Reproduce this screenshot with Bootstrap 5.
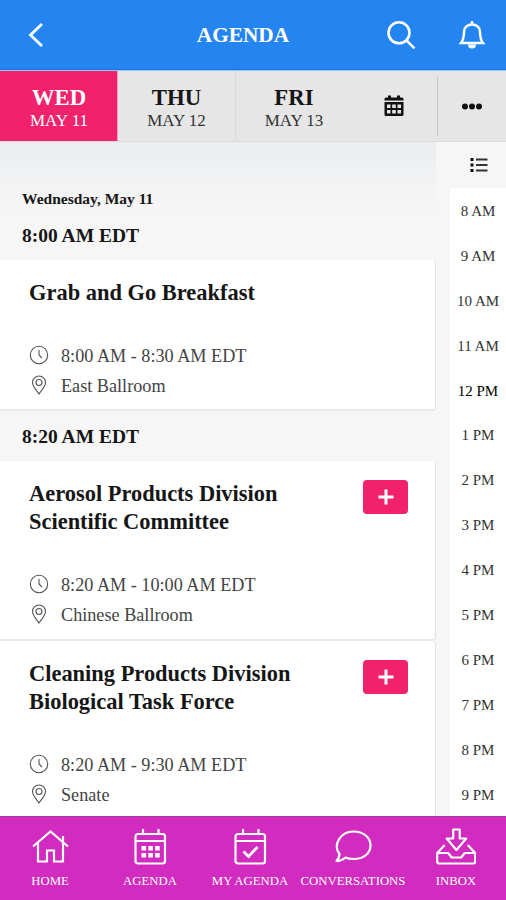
<!DOCTYPE html>
<html lang="en">
<head>
<meta charset="utf-8">
<meta name="viewport" content="width=device-width, initial-scale=1">
<title>Agenda</title>
<link href="https://cdn.jsdelivr.net/npm/bootstrap@5.3.0/dist/css/bootstrap.min.css" rel="stylesheet">
<style>
body{font-family:"Liberation Serif","Times New Roman",serif;color:#161616;background:#f6f6f6;overflow:hidden}
svg{display:block;fill:none;stroke:currentColor;flex:none}
.app{height:900px;width:506px}
.topbar{height:71px;background:#2585f0;border-bottom:1px solid #9cc6f5;box-shadow:inset 0 -1px #1a74dc;padding:0 20px 0 25px}
.topbar h1{font-size:21.3px;line-height:24px;padding-left:55px;padding-bottom:1px}
.glyphs{gap:42px}
.days{height:71px;background:#e6e6e6;border-bottom:1px solid #dadada}
.day{width:118px;line-height:23px;padding-top:15px;border-right:1px solid #d9d9d9}
.day b{font-size:22.8px;display:block}
.day span{font-size:17px;display:block;color:#333}
.day.on{background:#f0226c;color:#fff;height:70px;border-color:#f7a0bf;padding-left:1px}
.day.on span{color:#fff}
.day.last{border:0;width:116px}
.cal{width:85px;padding:0 1px 0 0}
.more{width:69px;border-left:1px solid #c4c4c4;height:59px}
.feed{width:436px;background:linear-gradient(#ebedef,#f6f6f6 70px)}
.date{font-size:15.5px;line-height:18px;padding:48px 0 0 22px}
.slot{font-size:19.5px;line-height:24px;padding-left:22px}
.s1{margin:16px 0 12px}.s2{margin:14px 0 12px}
.session{background:#fff;border-right:1px solid #e2e2e2;border-bottom:2px solid #e9e9e9;border-radius:0 4px 4px 0;padding:19px 27px 0 29px}
.session h2{font-size:22.45px;line-height:28px;width:290px}
.a{height:151px}.b{height:180px}.c{height:180px}
.meta{font-size:18.2px;line-height:30px;color:#444;gap:12px}
.when{margin-top:34px}
.meta svg{stroke:#555;stroke-width:1.1;margin-top:-2px}
.add{width:45px;height:34px;background:#f0226c;color:#fff;border-radius:4px}
.rail{width:70px}
.railtop{height:46px;padding:0 17px 0 0}
.hours{width:56px;background:#fff;font-size:15px;color:#333}
.hours div{height:44.9px;line-height:46px}
.tabs{height:84px;background:#d22bbf;border-top:1px solid #a43a9a;color:#fff;font-size:12.75px;line-height:16px;padding-top:10px}
.tabs a{width:100px;color:#fff;text-decoration:none}
.tabs .wide{width:106px}
.tabs svg{height:40px;width:40px;stroke-width:2.2;margin-bottom:6px}
</style>
</head>
<body>
<div class="app d-flex flex-column">
<header class="topbar d-flex align-items-center flex-shrink-0">
  <svg width="20" height="26" viewBox="0 0 20 26" stroke-width="2.8"><path d="M17 2 5.500 13 17 24" stroke="#fff"/></svg>
  <h1 class="flex-grow-1 m-0 fw-bold text-white text-center">AGENDA</h1>
  <div class="d-flex text-white align-items-center glyphs">
  <svg width="30" height="30" viewBox="0 0 30 30" stroke-width="2.6"><circle cx="13" cy="12.800" r="10.500"/><path d="m20.500 20.300 8 8"/></svg>
  <svg width="28" height="30" viewBox="0 0 28 30" stroke-width="2.400"><path d="M3 23h22c-2.600-3-3-6-3-11.500C22 7.500 18.500 4.500 14 4.500S6 7.500 6 11.500C6 17 5.600 20 3 23zM14 1v3.500"/><path d="M10 24.500h8a4 4 0 0 1-8 0z" fill="#fff" stroke="none"/></svg>
  </div>
</header>
<nav class="days d-flex text-center flex-shrink-0">
  <div class="day on"><b>WED</b><span>MAY 11</span></div>
  <div class="day"><b>THU</b><span>MAY 12</span></div>
  <div class="day last"><b>FRI</b><span>MAY 13</span></div>
  <div class="cal d-flex align-items-center justify-content-center"><svg width="20" height="22" viewBox="0 0 20 22"><path d="M.5 5.500V4q0-1.500 1.500-1.500h2V.5h3v2h6v-2h3v2h2q1.500 0 1.500 1.500v1.500zM.5 7h19v12.500q0 1.500-1.500 1.500H2Q.5 21 .5 19.500z" fill="#111" stroke="none"/><path d="M3 9.500h3.500v3.500H3zm5.200 0h3.600v3.500H8.200zm5.300 0H17v3.500h-3.500zM3 15h3.500v3.500H3zm5.200 0h3.600v3.500H8.200zm5.300 0H17v3.500h-3.500z" fill="#e6e6e6" stroke="none"/></svg></div>
  <div class="more d-flex align-items-center justify-content-center align-self-center"><svg width="22" height="8" viewBox="0 0 22 8"><g fill="#111" stroke="none"><circle cx="4" cy="4.500" r="3"/><circle cx="11" cy="4.500" r="3"/><circle cx="18" cy="4.500" r="3"/></g></svg></div>
</nav>
<main class="d-flex flex-grow-1 overflow-hidden">
  <section class="feed">
    <div class="date fw-bold">Wednesday, May 11</div>
    <div class="slot s1 fw-bold">8:00 AM EDT</div>
    <article class="session a">
      <h2 class="fw-bold m-0">Grab and Go Breakfast</h2>
      <div class="meta when d-flex align-items-center"><svg width="20" height="20" viewBox="0 0 20 20"><circle cx="10" cy="10" r="8.700"/><path d="M10 5v5l3 3"/></svg>8:00 AM - 8:30 AM EDT</div>
      <div class="meta d-flex align-items-center"><svg width="20" height="20" viewBox="0 0 20 20"><path d="M10 19C6 13.500 3.500 11 3.500 7.500a6.500 6.500 0 0 1 13 0C16.500 11 14 13.500 10 19z"/><circle cx="10" cy="7.500" r="3"/></svg>East Ballroom</div>
    </article>
    <div class="slot s2 fw-bold">8:20 AM EDT</div>
    <article class="session b">
      <div class="d-flex justify-content-between"><h2 class="fw-bold m-0">Aerosol Products Division<br>Scientific Committee</h2>
      <button class="add btn p-0 d-flex align-items-center justify-content-center" aria-label="Add"><svg width="16" height="16" viewBox="0 0 16 16" stroke-width="3"><path d="M8 .5v15M.5 8h15"/></svg></button></div>
      <div class="meta when d-flex align-items-center"><svg width="20" height="20" viewBox="0 0 20 20"><circle cx="10" cy="10" r="8.700"/><path d="M10 5v5l3 3"/></svg>8:20 AM - 10:00 AM EDT</div>
      <div class="meta d-flex align-items-center"><svg width="20" height="20" viewBox="0 0 20 20"><path d="M10 19C6 13.500 3.500 11 3.500 7.500a6.500 6.500 0 0 1 13 0C16.500 11 14 13.500 10 19z"/><circle cx="10" cy="7.500" r="3"/></svg>Chinese Ballroom</div>
    </article>
    <article class="session c">
      <div class="d-flex justify-content-between"><h2 class="fw-bold m-0">Cleaning Products Division<br>Biological Task Force</h2>
      <button class="add btn p-0 d-flex align-items-center justify-content-center" aria-label="Add"><svg width="16" height="16" viewBox="0 0 16 16" stroke-width="3"><path d="M8 .5v15M.5 8h15"/></svg></button></div>
      <div class="meta when d-flex align-items-center"><svg width="20" height="20" viewBox="0 0 20 20"><circle cx="10" cy="10" r="8.700"/><path d="M10 5v5l3 3"/></svg>8:20 AM - 9:30 AM EDT</div>
      <div class="meta d-flex align-items-center"><svg width="20" height="20" viewBox="0 0 20 20"><path d="M10 19C6 13.500 3.500 11 3.500 7.500a6.500 6.500 0 0 1 13 0C16.500 11 14 13.500 10 19z"/><circle cx="10" cy="7.500" r="3"/></svg>Senate</div>
    </article>
  </section>
  <aside class="rail d-flex flex-column align-items-end">
    <div class="railtop d-flex align-items-center flex-shrink-0"><svg width="20" height="16" viewBox="0 0 20 16"><path d="M7 2.500h11.500M7 8h11.500M7 13.500h11.500" stroke="#333" stroke-width="2"/><path d="M1.500 1h3v3h-3zm0 5.500h3v3h-3zm0 5.500h3v3h-3z" fill="#111" stroke="none"/></svg></div>
    <div class="hours text-center flex-shrink-0"><div>8 AM</div><div>9 AM</div><div>10 AM</div><div>11 AM</div><div class="text-black">12 PM</div><div>1 PM</div><div>2 PM</div><div>3 PM</div><div>4 PM</div><div>5 PM</div><div>6 PM</div><div>7 PM</div><div>8 PM</div><div>9 PM</div></div>
  </aside>
</main>
<nav class="tabs d-flex flex-shrink-0 text-center">
  <a class="d-flex flex-column align-items-center" href="#"><svg viewBox="0 0 40 40"><path d="M3 19.500 20.500 4.500 38 19.500M8 16v18.500h9V23.500h7v11h9V16M33 9v6"/></svg>HOME</a>
  <a class="d-flex flex-column align-items-center" href="#"><svg viewBox="0 0 40 40"><rect x="5.500" y="7" width="29.500" height="29.500" rx="2.500"/><path d="M5 14h30M13 2V7M28.500 2V7"/><path d="M11.500 19h4.600v4.600h-4.600zm6.800 0h4.600v4.600h-4.600zm6.800 0h4.600v4.600h-4.600zM11.500 26h4.600v4.600h-4.600zm6.800 0h4.600v4.600h-4.600zm6.800 0h4.600v4.600h-4.600z" fill="#fff" stroke="none"/></svg>AGENDA</a>
  <a class="d-flex flex-column align-items-center" href="#"><svg viewBox="0 0 40 40"><rect x="5.500" y="7" width="29.500" height="29.500" rx="2.500"/><path d="M5 14h30M13 2V7M28.500 2V7"/><path d="m13.500 24.500 5 5 9-9.500" stroke-width="2.700"/></svg>MY AGENDA</a>
  <a class="wide d-flex flex-column align-items-center" href="#"><svg viewBox="0 0 40 40"><path d="M6.500 27C-.5 18 7.500 4.500 20.500 4.500c10 0 17 6 17 14S30.500 32 20.500 32q-5 0-8-1.500Q8 34.500 3.500 34 6.500 31 6.500 27z" stroke-linejoin="round"/></svg>CONVERSATIONS</a>
  <a class="d-flex flex-column align-items-center" href="#"><svg viewBox="0 0 40 40" stroke-linejoin="round"><path d="M18 2.500h6.500v9H31L21.200 23l-9.700-11.500H18zM9.500 18 2 26v8.500q0 2 2 2h34q2 0 2-2V26l-7.500-8M2 26h11l3.500 4.500h9.500L29.500 26H40" transform="translate(-.8)"/></svg>INBOX</a>
</nav>
</div>
<script src="https://cdn.jsdelivr.net/npm/bootstrap@5.3.0/dist/js/bootstrap.bundle.min.js"></script>
</body>
</html>
